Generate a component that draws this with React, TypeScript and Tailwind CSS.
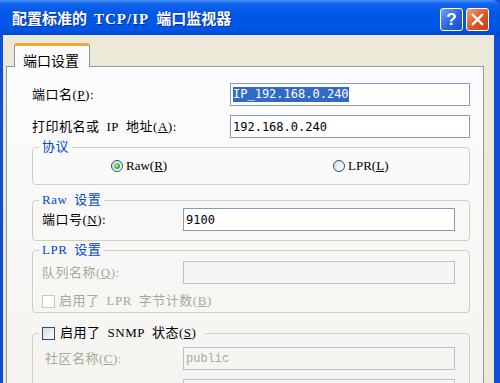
import React from 'react';

const label = "font-['Liberation_Serif','Noto_Sans_CJK_SC',serif] text-[13px] leading-[14px] tracking-[0.5px] whitespace-nowrap";
const editFont = "font-['DejaVu_Sans_Mono','Noto_Sans_CJK_SC',monospace] text-[12px]";

const Edit = ({ children, width, disabled }: { children?: React.ReactNode; width: string; disabled?: boolean }) => (
  <div
    className={`${width} h-[23px] flex items-center px-[2px] border ${editFont} ${
      disabled ? 'border-[#b4c2d4] bg-[#f6f5f1] text-[#aca899]' : 'border-[#7f9db9] bg-white text-black'
    }`}
  >
    {children}
  </div>
);

const Radio = ({ checked }: { checked?: boolean }) => (
  <span className="w-[12px] h-[12px] rounded-full border border-[#1c5180] bg-[linear-gradient(135deg,#dcdcd6,#ffffff)] flex items-center justify-center shrink-0">
    {checked && (
      <span className="w-[6px] h-[6px] rounded-full bg-[radial-gradient(circle_at_40%_40%,#b5f0b5,#21a121_70%)]" />
    )}
  </span>
);

const Check = ({ disabled }: { disabled?: boolean }) => (
  <span
    className={`w-[13px] h-[13px] border shrink-0 ${
      disabled ? 'border-[#cac8bb] bg-white' : 'border-[#1c5180] bg-[linear-gradient(135deg,#dcdcd6,#ffffff)]'
    }`}
  />
);

const u = (c: string) => <span className="underline">{c}</span>;

export default function App() {
  return (
    <div className="w-[500px] h-[383px] overflow-hidden bg-[#0f4fd8] flex flex-col">
      {/* title bar */}
      <div className="h-[35px] shrink-0 flex items-center pl-[12px] pr-[8px] rounded-tr-[8px] bg-[linear-gradient(180deg,#4a96fc_0%,#1665ee_9%,#0058e6_35%,#0055e4_85%,#0047cc_100%)]">
        <span className="font-['Liberation_Serif','Noto_Sans_CJK_SC',serif] font-bold text-[15px] text-white [text-shadow:1px_1px_0_#0a2f9a] whitespace-nowrap pt-[3px]">
          配置标准的<span className="mx-[7px] tracking-[1px]">TCP/IP</span>端口监视器
        </span>
        <div className="ml-auto flex gap-[3px] mt-[4px] mr-[3px]">
          <div className="w-[23px] h-[23px] rounded-[3px] border border-white bg-[linear-gradient(135deg,#6fa4fb,#2a63e0_55%,#1d50cf)] flex items-center justify-center">
            <span className="font-['Liberation_Sans',sans-serif] font-bold text-[17px] leading-none text-white">?</span>
          </div>
          <div className="w-[23px] h-[23px] rounded-[3px] border border-white bg-[linear-gradient(135deg,#f0a080,#e05a2c_50%,#c7390f)] flex items-center justify-center">
            <svg width="13" height="13" viewBox="0 0 13 13">
              <path d="M2 2 L11 11 M11 2 L2 11" stroke="#fff" strokeWidth="2.4" strokeLinecap="square" />
            </svg>
          </div>
        </div>
      </div>

      {/* body */}
      <div className="flex-1 ml-[3px] mr-[6px] bg-[#ece9d8] pl-[3px] pr-[10px] pt-[8px] flex flex-col">
        <div className="pl-[8px] flex">
          <div className="relative z-10 -mb-px w-[76px] h-[24px] rounded-t-[3px] border-t-[3px] border-t-[#f5a83a] border-x border-x-[#919b9c] bg-[#fcfcfe] pl-[8px] pt-[2px]">
            <span className="font-['Noto_Sans_CJK_SC',sans-serif] text-[14px] leading-[16px] text-black">端口设置</span>
          </div>
        </div>

        <div className="flex-1 border border-[#919b9c] bg-[linear-gradient(180deg,#fcfcfe,#f4f3ee)] pl-[25px] flex flex-col">
          <div className="mt-[16px] flex items-center">
            <span className={`${label} w-[198px]`}>端口名({u('P')}):</span>
            <Edit width="w-[240px]">
              <span className="bg-[#316ac5] text-white leading-[15px]">IP_192.168.0.240</span>
            </Edit>
          </div>
          <div className="mt-[9px] flex items-center">
            <span className={`${label} w-[198px]`}>打印机名或{'\u2002'}IP{'\u2002'}地址({u('A')}):</span>
            <Edit width="w-[240px]">192.168.0.240</Edit>
          </div>

          <fieldset className="mt-[2px] w-[438px] border border-[#d0d0bf] rounded-[4px] px-[9px] pb-[11px]">
            <legend className={`${label} -ml-[3px] px-[3px] text-[#0046d5]`}>协议</legend>
            <div className="mt-[5px] flex items-center h-[14px]">
              <div className="ml-[69px] w-[222px] flex items-center gap-[3px]">
                <Radio checked />
                <span className="font-['Liberation_Serif',serif] text-[13px] text-black">Raw({u('R')})</span>
              </div>
              <div className="flex items-center gap-[3px]">
                <Radio />
                <span className="font-['Liberation_Serif',serif] text-[13px] text-black">LPR({u('L')})</span>
              </div>
            </div>
          </fieldset>

          <fieldset className="mt-[8px] w-[438px] border border-[#d0d0bf] rounded-[4px] px-[9px] pb-[9px]">
            <legend className={`${label} -ml-[3px] px-[3px] text-[#0046d5]`}>Raw{'\u2002'}设置</legend>
            <div className="mt-[1px] flex items-center">
              <span className={`${label} w-[141px] text-black`}>端口号({u('N')}):</span>
              <Edit width="w-[272px]">9100</Edit>
            </div>
          </fieldset>

          <fieldset className="mt-[2px] w-[438px] border border-[#d0d0bf] rounded-[4px] px-[9px] pb-[4px]">
            <legend className={`${label} -ml-[3px] px-[3px] text-[#0046d5]`}>LPR{'\u2002'}设置</legend>
            <div className="mt-[4px] flex items-center">
              <span className={`${label} w-[141px] text-[#aca899]`}>队列名称({u('Q')}):</span>
              <Edit width="w-[272px]" disabled />
            </div>
            <div className="mt-[10px] flex items-center gap-[4px]">
              <Check disabled />
              <span className={`${label} text-[#aca899]`}>启用了{'\u2002'}LPR{'\u2002'}字节计数({u('B')})</span>
            </div>
          </fieldset>

          <fieldset className="mt-[13px] w-[438px] border border-[#d0d0bf] rounded-[4px] px-[9px] pb-[8px]">
            <legend className="-ml-[3px] pl-[3px] pr-[9px]">
              <span className="flex items-center gap-[5px]">
                <Check />
                <span className={`${label} text-black`}>启用了{'\u2002'}SNMP{'\u2002'}状态({u('S')})</span>
              </span>
            </legend>
            <div className="mt-[7px] flex items-center">
              <span className={`${label} w-[141px] pl-[3px] text-[#aca899]`}>社区名称({u('C')}):</span>
              <Edit width="w-[272px]" disabled>
                <span className="font-['Liberation_Mono',monospace]">public</span>
              </Edit>
            </div>
            <div className="mt-[9px] flex items-center">
              <span className={`${label} w-[141px] pl-[3px] text-[#aca899]`}>SNMP{'\u2002'}设备索引({u('D')}):</span>
              <Edit width="w-[272px]" disabled>1</Edit>
            </div>
          </fieldset>
        </div>
      </div>
    </div>
  );
}
